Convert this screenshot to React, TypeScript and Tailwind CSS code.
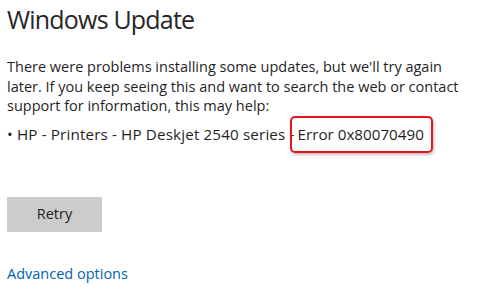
export default function App() {
  return (
    <div
      className="w-[485px] h-[287px] bg-white text-[#1f1f1f] pl-[7px] pt-[1px]"
      style={{ fontFamily: '"Segoe UI", "Open Sans", "Noto Sans", sans-serif' }}
    >
      <h1 className="text-[25px] leading-[36px] font-normal tracking-[-0.8px] text-[#262626]">
        Windows Update
      </h1>
      <p className="mt-[20px] text-[14.5px] leading-[19.5px] pr-2">
        There were problems installing some updates, but we'll try again later. If you keep
        seeing this and want to search the web or contact support for information, this may
        help:
      </p>
      <div className="mt-[9px] h-[19px] flex items-center text-[15.2px] leading-[19px]">
        <span className="tracking-[0.15px]">• HP - Printers - HP Deskjet 2540 series -</span>
        <span className="ml-[-5px] shrink-0 rounded-[5px] border-2 border-[#e8141c] pl-[6px] pr-[7px] py-[7px] shadow-[1px_2px_3px_rgba(0,0,0,0.25)]">
          Error 0x80070490
        </span>
      </div>
      <button className="mt-[53px] block w-[95px] h-[35px] bg-[#cccccc] text-[14.5px] text-[#1f1f1f]">
        Retry
      </button>
      <a className="mt-[32px] block text-[14.5px] leading-[19px] text-[#0063b1]">Advanced options</a>
    </div>
  );
}
